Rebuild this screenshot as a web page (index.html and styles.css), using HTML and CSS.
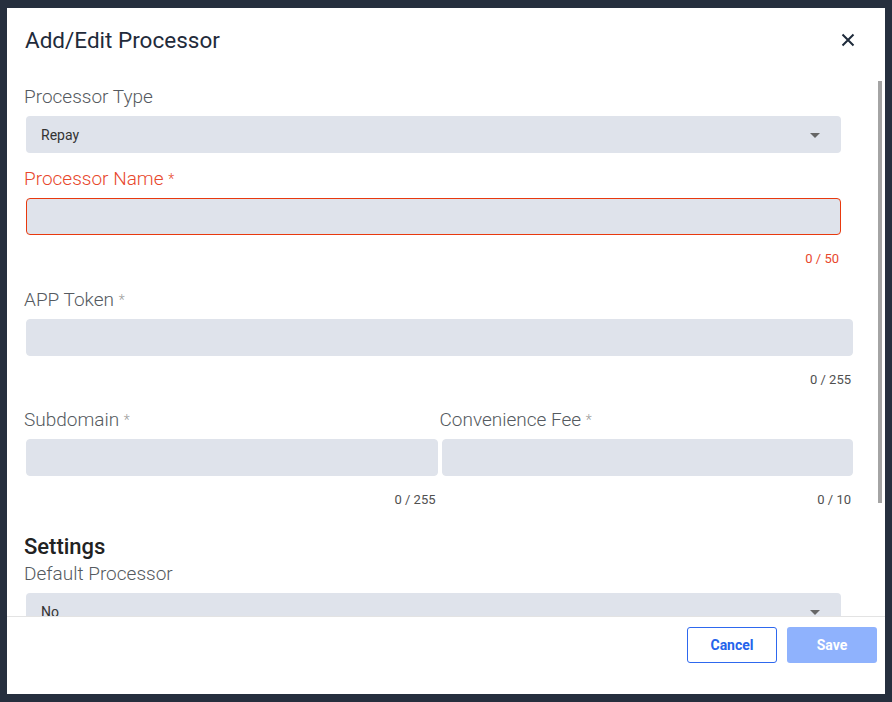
FILE: index.html
```html
<!DOCTYPE html>
<html lang="en">
<head>
  <meta charset="UTF-8" />
  <title>Add/Edit Processor</title>
  <link rel="stylesheet" href="styles.css">
</head>
<body>

  <div class="modal">
    <div class="modal-header">
      <h2>Add/Edit Processor</h2>
      <button class="close-btn" aria-label="Close">
        <svg width="14" height="14" viewBox="0 0 14 14">
          <path d="M1.5 1.5 L12.5 12.5 M12.5 1.5 L1.5 12.5" stroke="#1f2b3b" stroke-width="2" fill="none" />
        </svg>
      </button>
    </div>

    <div class="body-wrap">
      <div class="modal-body">
        <div class="field field-select">
          <label>Processor Type</label>
          <div class="select">
            <span>Repay</span>
            <span class="caret"></span>
          </div>
        </div>

        <div class="field field-error">
          <label>Processor Name <span class="req">*</span></label>
          <input type="text" class="short" />
          <div class="counter short">0 / 50</div>
        </div>

        <div class="field">
          <label>APP Token <span class="req">*</span></label>
          <input type="text" />
          <div class="counter">0 / 255</div>
        </div>

        <div class="row">
          <div class="field">
            <label>Subdomain <span class="req">*</span></label>
            <input type="text" />
            <div class="counter">0 / 255</div>
          </div>
          <div class="field">
            <label>Convenience Fee <span class="req">*</span></label>
            <input type="text" />
            <div class="counter">0 / 10</div>
          </div>
        </div>

        <h3>Settings</h3>
        <div class="field field-select">
          <label>Default Processor</label>
          <div class="select">
            <span>No</span>
            <span class="caret"></span>
          </div>
        </div>
      </div>
      <div class="scroll-thumb"></div>
    </div>

    <div class="modal-footer">
      <button class="btn btn-outline">Cancel</button>
      <button class="btn btn-primary" disabled>Save</button>
    </div>
  </div>

</body>
</html>
```

FILE: styles.css
```css
* {
  box-sizing: border-box;
}

body {
  font-family: Roboto, 'Liberation Sans', sans-serif;
  background: #262f3e;
  margin: 0;
  padding: 8px 7px;
}

.modal {
  width: 878px;
  height: 686px;
  background: #ffffff;
  display: flex;
  flex-direction: column;
}

.modal-header {
  height: 62px;
  flex: none;
  display: flex;
  justify-content: space-between;
  align-items: flex-start;
  padding: 19px 30px 0 18px;
}

.modal-header h2 {
  margin: 0;
  font-size: 22.5px;
  line-height: 26px;
  font-weight: 400;
  color: #1f2b3b;
}

.close-btn {
  background: none;
  border: none;
  padding: 0;
  margin-top: 6px;
  width: 14px;
  height: 14px;
  cursor: pointer;
}

.body-wrap {
  flex: 1;
  min-height: 0;
  position: relative;
}

.modal-body {
  height: 100%;
  overflow-y: auto;
  scrollbar-width: none;
  padding: 16px 30px 118px 17px;
}

.modal-body::-webkit-scrollbar {
  display: none;
}

/* custom scrollbar thumb, drawn over the body */
.scroll-thumb {
  position: absolute;
  top: 11px;
  right: 3px;
  width: 4px;
  height: 422px;
  background: #a4a4a4;
}

.field label {
  display: block;
  font-size: 19px;
  line-height: 22px;
  font-weight: 300;
  color: #555a60;
  margin-bottom: 8px;
}

.req {
  font-size: 14px;
  vertical-align: top;
  color: #9a9a9a;
}

.field input {
  display: block;
  width: calc(100% - 4px);
  height: 37px;
  margin: 0 2px;
  background: #dfe3eb;
  border: 1px solid #dfe3eb;
  border-radius: 4px;
  font-size: 14px;
  outline: none;
}

.field input.short {
  width: calc(100% - 16px);
}

.counter {
  text-align: right;
  font-size: 13px;
  line-height: 16px;
  font-weight: 400;
  color: #505050;
  margin: 16px 4px 21px 0;
}

.field-error .counter {
  margin-bottom: 22px;
}

.counter.short {
  margin-right: 16px;
}

.field-select {
  margin-bottom: 15px;
}

.select {
  height: 37px;
  margin: 0 14px 0 2px;
  background: #dfe3eb;
  border-radius: 4px;
  display: flex;
  align-items: center;
  justify-content: space-between;
  padding: 0 21px 0 15px;
  font-size: 14px;
  color: #333;
}

.caret {
  width: 0;
  height: 0;
  border-left: 5px solid transparent;
  border-right: 5px solid transparent;
  border-top: 5px solid #666;
  margin-top: 1px;
}

.field-error label,
.field-error .req {
  color: #e8472c;
}

.field-error input {
  border-color: #e8390e;
}

.field-error .counter {
  color: #e8472c;
}

.row {
  display: grid;
  grid-template-columns: 1fr 1fr;
}

.modal-body h3 {
  margin: 5px 0 3px;
  font-size: 22px;
  line-height: 26px;
  font-weight: 500;
  color: #222;
}

.modal-footer {
  height: 78px;
  flex: none;
  border-top: 1px solid #e3e3e3;
  display: flex;
  justify-content: flex-end;
  gap: 10px;
  padding: 10px 8px 0 0;
}

.btn {
  width: 90px;
  height: 36px;
  font-family: Roboto, 'Liberation Sans', sans-serif;
  font-size: 14px;
  font-weight: 700;
  border-radius: 3px;
  cursor: pointer;
}

.btn-outline {
  background: #ffffff;
  color: #2563eb;
  border: 1px solid #2e68ee;
}

.btn-primary {
  background: #8fb2fd;
  color: #ffffff;
  border: none;
}
```
